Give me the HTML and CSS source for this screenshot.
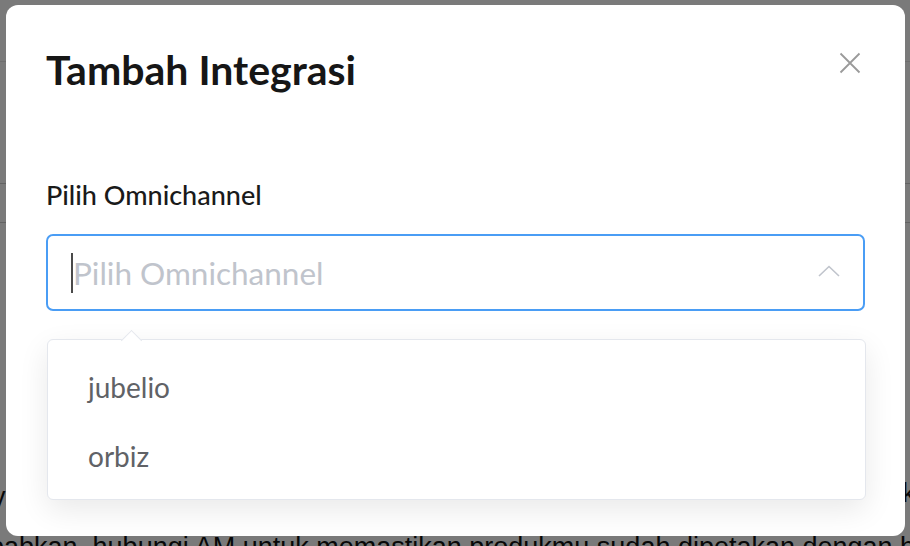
FILE: index.html
```html
<!DOCTYPE html>
<html>
<head>
<meta charset="utf-8">
<link rel="stylesheet" href="styles.css">
</head>
<body>
<div class="page">
  <div class="bg-line l1"></div>
  <div class="bg-line l2"></div>
  <div class="bg-line l3"></div>
  <div class="bg-text t1">y</div>
  <div class="bg-text t2">k</div>
  <div class="bg-text t3">pabkan, hubungi AM untuk memastikan produkmu sudah dipetakan dengan benar</div>
</div>
<div class="overlay"></div>
<div class="modal">
  <div class="modal-header">
    <h1 class="title">Tambah Integrasi</h1>
    <svg class="close" width="22" height="22" viewBox="0 0 22 22"><path d="M1.5 1.5 L20.5 20.5 M20.5 1.5 L1.5 20.5" stroke="#9a9a9a" stroke-width="1.8" fill="none"/></svg>
  </div>
  <div class="field">
    <div class="label">Pilih Omnichannel</div>
    <div class="select">
      <span class="caret"></span>
      <span class="placeholder">Pilih Omnichannel</span>
      <svg class="chev" width="22" height="12" viewBox="0 0 22 12"><path d="M1 11 L11 1.5 L21 11" stroke="#c0c4cc" stroke-width="1.6" fill="none"/></svg>
    </div>
    <div class="dropdown">
      <span class="arrow"></span>
      <div class="item">jubelio</div>
      <div class="item">orbiz</div>
    </div>
  </div>
</div>
</body>
</html>
```
FILE: styles.css
```css
html, body { margin: 0; padding: 0; }
body { width: 910px; height: 546px; overflow: hidden; position: relative; font-family: "Lato", "Noto Sans", sans-serif; background: #fff; }
.page { position: absolute; inset: 0; background: #fff; overflow: hidden; }
.bg-line { position: absolute; left: 0; right: 0; height: 1px; }
.l1 { top: 61px; background: #e6e6e6; }
.l2 { top: 183px; background: #cfcfcf; }
.l3 { top: 222px; background: #cfcfcf; }
.bg-text { position: absolute; font-family: "Liberation Sans", Arial, sans-serif; font-size: 27px; color: #111; white-space: nowrap; }
.t1 { left: -8px; top: 482px; }
.t2 { left: 902px; top: 478px; }
.t3 { left: -11px; top: 532px; }
.overlay { position: absolute; inset: 0; background: rgba(0,0,0,0.52); }
.modal { position: absolute; left: 6px; top: 5px; width: 899px; height: 531px; background: #fff; border-radius: 12px; box-sizing: border-box; padding: 0 40px; }
.modal-header { display: flex; justify-content: space-between; align-items: flex-start; padding-top: 40px; }
.title { margin: 0; font-size: 41px; font-weight: 700; color: #161616; line-height: 50px; }
.close { margin-top: 7px; margin-right: 4px; }
.field { margin-top: 84px; }
.label { font-size: 27px; font-weight: 500; color: #1a1a1a; line-height: 32px; }
.select { margin-top: 23px; height: 77px; border: 2px solid #4a9df5; border-radius: 7px; box-sizing: border-box; display: flex; align-items: center; padding-left: 23px; padding-right: 23px; }
.caret { width: 2px; height: 40px; background: #4a4a4a; }
.placeholder { font-size: 31.5px; color: #c0c4cc; flex: 1; }
.chev { margin-top: -4px; }
.dropdown { position: relative; margin-top: 28px; margin-left: 1px; margin-right: -1px; height: 161px; box-sizing: border-box; border: 1px solid #e4e7ed; border-radius: 6px; background: #fff; box-shadow: 0 10px 30px rgba(0,0,0,0.09); padding: 27px 0 0 40px; }
.arrow { position: absolute; top: -7px; left: 76px; width: 14px; height: 14px; background: #fff; border-left: 1px solid #e4e7ed; border-top: 1px solid #e4e7ed; transform: rotate(45deg); }
.item { font-size: 28px; color: #606266; line-height: 40px; margin-bottom: 29px; }
```
